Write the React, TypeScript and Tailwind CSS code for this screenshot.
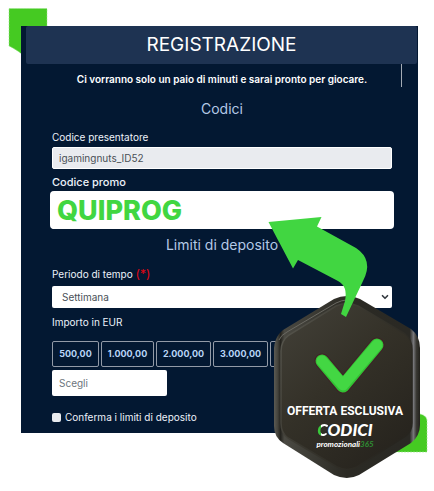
import React, { useState } from "react";
import { ChevronDown } from "lucide-react";

const amounts = [
  { label: "500,00", width: "w-[47px]" },
  { label: "1.000,00", width: "w-[53px]" },
  { label: "2.000,00", width: "w-[55px]" },
  { label: "3.000,00", width: "w-[55px]" },
  { label: "5.000,00", width: "w-[55px]" },
];

function CornerTopLeft() {
  return (
    <svg
      className="absolute left-2 top-2"
      width="40"
      height="48"
      viewBox="8 8 40 48"
      aria-hidden="true"
    >
      <path
        d="M9 8.500H47V30L21 53.500Q17 50 9 46Z"
        fill="#45ca22"
        stroke="#9be589"
        strokeWidth="0.6"
        strokeDasharray="2 1"
      />
    </svg>
  );
}

function OfferBadge() {
  return (
    <div className="absolute right-0 top-[210px] w-[174px] pointer-events-none">
      <svg width="174" height="281" viewBox="260 210 174 281" aria-hidden="true">
        <defs>
          <linearGradient id="edge" x1="0" y1="0" x2="1" y2="0">
            <stop offset="0" stopColor="#5b5a53" />
            <stop offset="0.025" stopColor="#45443d" />
            <stop offset="0.045" stopColor="#24231e" />
            <stop offset="0.07" stopColor="#4a4942" />
            <stop offset="0.5" stopColor="#2b2a24" />
            <stop offset="0.93" stopColor="#2a2924" />
            <stop offset="0.955" stopColor="#77777a" />
            <stop offset="0.975" stopColor="#3a3934" />
            <stop offset="1" stopColor="#22211c" />
          </linearGradient>
          <linearGradient id="face" x1="0" y1="0" x2="0.7" y2="1">
            <stop offset="0" stopColor="#434139" />
            <stop offset="0.5" stopColor="#343128" />
            <stop offset="1" stopColor="#27241e" />
          </linearGradient>
          <linearGradient id="rim" x1="0" y1="0" x2="1" y2="0.6">
            <stop offset="0" stopColor="#5c5b53" />
            <stop offset="0.5" stopColor="#38362e" />
            <stop offset="1" stopColor="#27251f" />
          </linearGradient>
        </defs>
        <path
          d="M414 412L423 415Q427 417 427 421V452H390Z"
          fill="#45ca22"
          stroke="#9be589"
          strokeWidth="0.6"
          strokeDasharray="2 1"
        />
        {/* Badge body */}
        <path
          d="M334 299Q347 293 360 299L411 329Q420 336 420 348V425Q420 436 411 443L359 475Q347 481 334 475L283 443Q274 437 274 426V348Q275 336 283 330Z"
          fill="url(#edge)"
        />
        <path
          d="M336 306Q347 301 358 306L405 334Q412 339 412 350V423Q412 431 406 436L357 467Q347 472 337 467L288 438Q281 433 281 423V351Q281 341 289 335Z"
          fill="url(#face)"
          stroke="url(#rim)"
          strokeWidth="1.5"
        />
        <path
          d="M279 340Q281 335 287 332L336 303Q342 300 347 300"
          fill="none"
          stroke="#6a6962"
          strokeWidth="1"
        />
        <path
          d="M322 361L343 386L377 345"
          fill="none"
          stroke="#431d27"
          strokeWidth="15"
          strokeLinecap="round"
          strokeLinejoin="round"
        />
        <path
          d="M322 361L343 386L377 345"
          fill="none"
          stroke="#32c034"
          strokeWidth="13"
          strokeLinecap="round"
          strokeLinejoin="round"
        />
        <path
          d="M322 361L343 385L377 345"
          fill="none"
          stroke="#43d743"
          strokeWidth="11"
          strokeLinecap="round"
          strokeLinejoin="round"
        />
        {/* Arrow to the promo code */}
        <path
          d="M268.500 222L321.500 217L317 226.500L356 248Q374 260 363 281L346 317L341 314L345 301Q348 286 338 281L298 260L293 268.500Z"
          fill="#41d641"
        />
      </svg>
      <div className="absolute inset-x-0 top-[191px] pr-2 pl-1 text-center text-white">
        <p className="whitespace-nowrap font-[Roboto,sans-serif] text-xs leading-5 font-bold">
          OFFERTA ESCLUSIVA
        </p>
        <p className="font-[Lato,sans-serif] text-[17px] leading-[18px] font-black italic">
          <span className="bg-linear-to-r from-[#39c93b] from-40% to-white to-40% bg-clip-text text-transparent">
            C
          </span>
          ODICI
        </p>
        <p className="font-[Lato,sans-serif] text-[8px] leading-[10px] font-bold italic">
          promozionali<span className="text-[#2f8f33]">365</span>
        </p>
      </div>
    </div>
  );
}

export default function App() {
  const [promo, setPromo] = useState("QUIPROG");
  const [limit, setLimit] = useState("");

  return (
    <main className="relative overflow-hidden bg-white pt-[26px] pr-4 pb-[58px] pl-[21px] font-[Inter,sans-serif]">
      <CornerTopLeft />

      <form
        className="relative bg-[#031832] pb-2 text-[10px] leading-4 text-[#edf2fa]"
        onSubmit={(e) => e.preventDefault()}
      >
        <header className="mr-px ml-[5px] rounded-xs bg-[#1e3352] text-center">
          <h1 className="text-[19px] leading-[38px] text-white">REGISTRAZIONE</h1>
        </header>
        <div className="absolute top-[38px] right-4 h-[23px] w-px bg-[#a4abb5]" />

        <div className="pr-[26px] pl-[31px]">
          <p className="pt-[7px] text-center font-semibold text-white">
            Ci vorranno solo un paio di minuti e sarai pronto per giocare.
          </p>

          <h2 className="pt-3 text-center text-sm leading-5 text-[#b4c9e6]">Codici</h2>

          <label htmlFor="presenter" className="mt-[10px] block">
            Codice presentatore
          </label>
          <input
            id="presenter"
            readOnly
            value="igamingnuts_ID52"
            className="mt-[2px] block h-[22px] w-full rounded-xs border border-white bg-[#e9ebef] px-[6px] text-[#495057]"
          />

          <label htmlFor="promo" className="mt-[5px] block text-[11px] font-medium">
            Codice promo
          </label>
          <div className="-mx-[2px] mt-px">
            <input
              id="promo"
              value={promo}
              onChange={(e) => setPromo(e.target.value)}
              className="block h-[38px] w-full rounded-sm bg-white px-[7px] text-[27px] font-extrabold text-[#41d641]"
            />
          </div>

          <h2 className="pt-[6px] text-center text-sm leading-5 text-[#b4c9e6]">
            Limiti di deposito
          </h2>

          <label htmlFor="period" className="mt-[11px] block">
            Periodo di tempo <span className="text-xs leading-4 text-[#e30613]">(*)</span>
          </label>
          <div className="relative mt-1">
            <select
              id="period"
              defaultValue="Settimana"
              className="block h-[22px] w-full appearance-none rounded-xs bg-white px-[10px] text-[#495057]"
            >
              <option>Settimana</option>
              <option>Mese</option>
            </select>
            <ChevronDown
              size={10}
              strokeWidth={4}
              className="pointer-events-none absolute top-[6px] right-[2px] text-[#343a40]"
            />
          </div>

          <label htmlFor="amount" className="mt-[6px] block">
            Importo in EUR
          </label>
          <div className="mt-[11px] flex gap-[2px] overflow-hidden">
            {amounts.map((item) => (
              <button
                key={item.label}
                type="button"
                onClick={() => setLimit(item.label)}
                className={`h-[26px] shrink-0 rounded-xs border border-[#929aa7] text-center text-[9px] font-bold text-[#b9d5f7] ${item.width}`}
              >
                {item.label}
              </button>
            ))}
          </div>
          <input
            id="amount"
            value={limit}
            onChange={(e) => setLimit(e.target.value)}
            placeholder="Scegli"
            className="mt-[3px] block h-[26px] w-[115px] rounded-xs bg-white px-[7px] text-[#495057] placeholder:text-[#6c757d]"
          />

          <label className="mt-[13px] flex items-center gap-1">
            <input
              type="checkbox"
              className="size-[9px] appearance-none rounded-xs bg-[#e9ebef] checked:bg-[#41d641]"
            />
            Conferma i limiti di deposito
          </label>
        </div>
      </form>

      <OfferBadge />
    </main>
  );
}
